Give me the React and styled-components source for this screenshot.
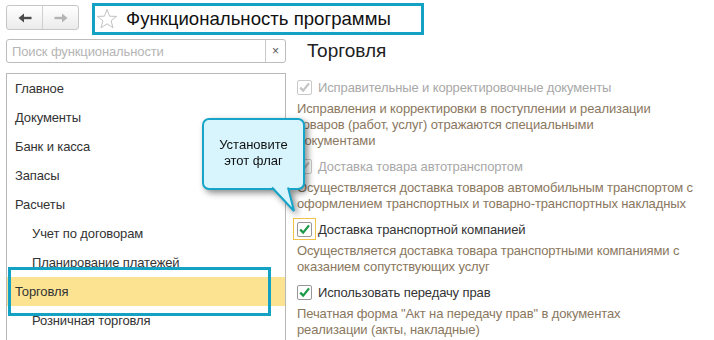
import React from 'react';
import styled, { createGlobalStyle } from 'styled-components';

const GlobalStyle = createGlobalStyle`
  body {
    margin: 0;
    background: #fff;
    font-family: "Liberation Sans", Arial, sans-serif;
  }
`;

const Page = styled.div`
  position: relative;
  width: 714px;
  height: 340px;
  overflow: hidden;
  font-size: 13px;
  letter-spacing: -0.12px;
  color: #333;
`;

const TopBar = styled.div`
  display: flex;
  align-items: flex-start;
  height: 39px;
  padding: 3px 0 0 6px;
  box-sizing: border-box;
`;

const NavGroup = styled.div`
  display: flex;
  margin-top: 2px;
  width: 73px;
  height: 25px;
  box-sizing: border-box;
  border: 1px solid #c6c6c6;
  border-radius: 3px;
  background: linear-gradient(#ffffff, #ebebeb);
`;

const NavButton = styled.div`
  flex: 1;
  display: flex;
  align-items: center;
  justify-content: center;
  & + & {
    border-left: 1px solid #d0d0d0;
  }
`;

const TitleBox = styled.div`
  display: flex;
  align-items: center;
  margin-left: 13px;
  width: 332px;
  height: 32px;
  box-sizing: border-box;
  border: 3px solid #14a2c4;
`;

const Title = styled.span`
  margin-left: 8px;
  font-size: 18.6px;
  letter-spacing: 0;
  color: #111;
`;

const Main = styled.div`
  display: flex;
  padding-left: 6px;
`;

const LeftCol = styled.div`
  display: flex;
  flex-direction: column;
  gap: 10px;
  width: 280px;
`;

const SearchBox = styled.div`
  display: flex;
  height: 24px;
  box-sizing: border-box;
  border: 1px solid #bcbcbc;
  border-radius: 3px;
`;

const SearchText = styled.div`
  flex: 1;
  display: flex;
  align-items: center;
  padding-left: 5px;
  color: #b5b5b5;
`;

const ClearButton = styled.div`
  width: 19px;
  display: flex;
  align-items: center;
  justify-content: center;
  border-left: 1px solid #c8c8c8;
  color: #555;
  font-size: 12px;
`;

const SectionList = styled.div`
  height: 280px;
  border: 1px solid #b8b8b8;
  border-bottom: none;
`;

const Section = styled.div`
  height: 29px;
  display: flex;
  align-items: center;
  padding-left: ${p => (p.$child ? 25 : 8)}px;
  background: ${p => (p.$active ? '#fbe392' : 'transparent')};
  color: #333;
`;

const RightCol = styled.div`
  margin-left: 11px;
  width: 410px;
`;

const Heading = styled.div`
  height: 24px;
  line-height: 24px;
  padding-left: 10px;
  font-size: 19px;
  letter-spacing: 0;
  color: #222;
  margin-bottom: 13px;
`;

const Option = styled.div`
  margin-bottom: 6px;
`;

const OptionRow = styled.div`
  display: flex;
  align-items: center;
  height: 22px;
`;

const CheckFrame = styled.div`
  display: flex;
  align-items: center;
  justify-content: center;
  width: 23px;
  height: 22px;
  box-sizing: border-box;
  margin-left: -4px;
  border: 1px solid ${p => (p.$focused ? '#f1c34a' : 'transparent')};
`;

const CheckBox = styled.div`
  width: 15px;
  height: 15px;
  box-sizing: border-box;
  border: 1px solid ${p => (p.$disabled ? '#c9c9c9' : '#989898')};
  border-radius: 2px;
  background: #fff;
  display: flex;
  align-items: center;
  justify-content: center;
`;

const OptionLabel = styled.span`
  margin-left: 2px;
  color: ${p => (p.$disabled ? '#a8a8a8' : '#333')};
`;

const OptionNote = styled.div`
  margin-top: 3px;
  line-height: 16px;
  white-space: nowrap;
  color: #8a7760;
`;

const NoteLine = styled.div``;

const Callout = styled.div`
  position: absolute;
  left: 202px;
  top: 118px;
  width: 103px;
  height: 72px;
  filter: drop-shadow(3px 3px 3px rgba(0, 0, 0, 0.45));
`;

const CalloutBody = styled.div`
  width: 100%;
  height: 100%;
  box-sizing: border-box;
  padding-top: 17px;
  border: 2px solid #16a5c8;
  border-radius: 7px;
  background: #d8f4fc;
  text-align: center;
  line-height: 16px;
  letter-spacing: 0;
  color: #111;
`;

const CalloutTail = styled.svg`
  position: absolute;
  left: 64px;
  top: 68px;
`;

const Marker = styled.div`
  position: absolute;
  left: 8px;
  top: 267px;
  width: 263px;
  height: 49px;
  box-sizing: border-box;
  border: 3px solid #14a2c4;
`;

const Check = ({ disabled }) => (
  <svg width="13" height="13" viewBox="0 0 13 13">
    <path
      d="M2.2 6.6 L5.2 9.6 L11 2.4"
      fill="none"
      stroke={disabled ? '#c4c4c4' : '#1c9a48'}
      strokeWidth="2.3"
    />
  </svg>
);

const Arrow = ({ dir, color }) => (
  <svg width="14" height="10" viewBox="0 0 14 10">
    <g transform={dir === 'right' ? 'translate(14 0) scale(-1 1)' : undefined}>
      <path d="M0.5 5 L6 0.5 L6 9.5 Z" fill={color} />
      <rect x="5" y="3.8" width="8.5" height="2.4" fill={color} />
    </g>
  </svg>
);

const Star = () => (
  <svg width="22" height="22" viewBox="0 0 22 22" style={{ marginLeft: 1 }}>
    <path
      d="M11 1.5 L13.6 8.2 L20.6 8.4 L15.1 12.8 L17 19.8 L11 15.8 L5 19.8 L6.9 12.8 L1.4 8.4 L8.4 8.2 Z"
      fill="none"
      stroke="#c2c2c2"
      strokeWidth="1"
    />
  </svg>
);

const sections = [
  { name: 'Главное' },
  { name: 'Документы' },
  { name: 'Банк и касса' },
  { name: 'Запасы' },
  { name: 'Расчеты' },
  { name: 'Учет по договорам', child: true },
  { name: 'Планирование платежей', child: true },
  { name: 'Торговля', active: true },
  { name: 'Розничная торговля', child: true },
];

const options = [
  {
    label: 'Исправительные и корректировочные документы',
    note: [
      'Исправления и корректировки в поступлении и реализации',
      'товаров (работ, услуг) отражаются специальными',
      'документами',
    ],
    disabled: true,
  },
  {
    label: 'Доставка товара автотранспортом',
    note: [
      'Осуществляется доставка товаров автомобильным транспортом с',
      'оформлением транспортных и товарно-транспортных накладных',
    ],
    disabled: true,
  },
  {
    label: 'Доставка транспортной компанией',
    note: [
      'Осуществляется доставка товара транспортными компаниями с',
      'оказанием сопутствующих услуг',
    ],
    focused: true,
  },
  {
    label: 'Использовать передачу прав',
    note: [
      'Печатная форма "Акт на передачу прав" в документах',
      'реализации (акты, накладные)',
    ],
  },
];

export default function App() {
  return (
    <Page>
      <GlobalStyle />
      <TopBar>
        <NavGroup>
          <NavButton><Arrow dir="left" color="#4a4a4a" /></NavButton>
          <NavButton><Arrow dir="right" color="#b4b4b4" /></NavButton>
        </NavGroup>
        <TitleBox>
          <Star />
          <Title>Функциональность программы</Title>
        </TitleBox>
      </TopBar>
      <Main>
        <LeftCol>
          <SearchBox>
            <SearchText>Поиск функциональности</SearchText>
            <ClearButton>×</ClearButton>
          </SearchBox>
          <SectionList>
            {sections.map(s => (
              <Section key={s.name} $child={s.child} $active={s.active}>{s.name}</Section>
            ))}
          </SectionList>
        </LeftCol>
        <RightCol>
          <Heading>Торговля</Heading>
          {options.map(o => (
            <Option key={o.label}>
              <OptionRow>
                <CheckFrame $focused={o.focused}>
                  <CheckBox $disabled={o.disabled}>
                    <Check disabled={o.disabled} />
                  </CheckBox>
                </CheckFrame>
                <OptionLabel $disabled={o.disabled}>{o.label}</OptionLabel>
              </OptionRow>
              <OptionNote>
                {o.note.map(line => <NoteLine key={line}>{line}</NoteLine>)}
              </OptionNote>
            </Option>
          ))}
        </RightCol>
      </Main>
      <Marker />
      <Callout>
        <CalloutBody>Установите<br />этот флаг</CalloutBody>
        <CalloutTail width="32" height="28" viewBox="0 0 32 28">
          <polygon points="6,0 28,25 22,0" fill="#d8f4fc" />
          <polyline points="6,1.5 28,25 22,1.5" fill="none" stroke="#16a5c8" strokeWidth="2" />
        </CalloutTail>
      </Callout>
    </Page>
  );
}
